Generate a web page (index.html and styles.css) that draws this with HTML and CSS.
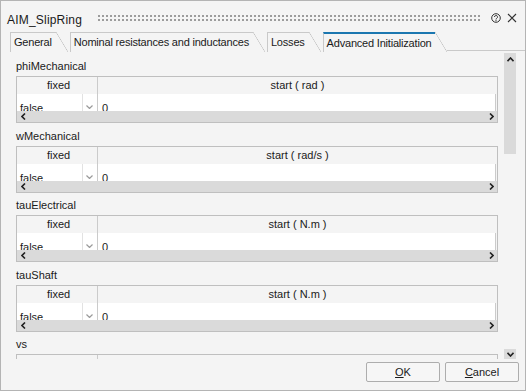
FILE: index.html
```html
<!DOCTYPE html>
<html lang="en">
<head>
    <meta charset="UTF-8">
    <title>AIM_SlipRing</title>
    <link rel="stylesheet" href="styles.css">
</head>
<body>
    <div class="dialog">
        <div class="titlebar">
            <span class="title">AIM_SlipRing</span>
            <span class="grip"></span>
            <svg class="help-icon" width="10" height="10" viewBox="0 0 10 10">
                <circle cx="5" cy="5" r="4.3" fill="none" stroke="#333" stroke-width="1"/>
                <path d="M3.5 4 A1.5 1.5 0 1 1 5.7 5.3 C5.1 5.6 5 5.9 5 6.5" fill="none" stroke="#333" stroke-width="1"/>
                <circle cx="5" cy="7.7" r="0.6" fill="#333"/>
            </svg>
            <svg class="close-icon" width="10" height="10" viewBox="0 0 10 10">
                <path d="M1 1 L9 9 M9 1 L1 9" stroke="#333" stroke-width="1.1"/>
            </svg>
        </div>

        <div class="tabs">
            <div class="tab"><span class="tab-label">General</span></div>
            <div class="tab"><span class="tab-label">Nominal resistances and inductances</span></div>
            <div class="tab"><span class="tab-label">Losses</span></div>
            <div class="tab active"><span class="tab-label">Advanced Initialization</span></div>
            <div class="tab-fill"></div>
        </div>

        <div class="page">
            <div class="groups">
                <div class="group">
                    <div class="group-label">phiMechanical</div>
                    <div class="grid">
                        <div class="grid-head">
                            <div class="col-fixed">fixed</div>
                            <div class="col-start">start ( rad )</div>
                        </div>
                        <div class="grid-row">
                            <div class="cell-fixed">
                                <span class="cell-text">false</span>
                                <span class="combo-arrow"><svg width="7" height="4" viewBox="0 0 7 4"><polyline points="0.5,0.5 3.5,3.5 6.5,0.5" fill="none" stroke="#9a9a9a" stroke-width="1.2"/></svg></span>
                            </div>
                            <div class="cell-start">0</div>
                        </div>
                        <div class="hscroll">
                            <svg width="5" height="7" viewBox="0 0 5 7"><polyline points="4,0.5 1,3.5 4,6.5" fill="none" stroke="#222" stroke-width="1.6"/></svg>
                            <svg width="5" height="7" viewBox="0 0 5 7"><polyline points="1,0.5 4,3.5 1,6.5" fill="none" stroke="#222" stroke-width="1.6"/></svg>
                        </div>
                    </div>
                </div>

                <div class="group">
                    <div class="group-label">wMechanical</div>
                    <div class="grid">
                        <div class="grid-head">
                            <div class="col-fixed">fixed</div>
                            <div class="col-start">start ( rad/s )</div>
                        </div>
                        <div class="grid-row">
                            <div class="cell-fixed">
                                <span class="cell-text">false</span>
                                <span class="combo-arrow"><svg width="7" height="4" viewBox="0 0 7 4"><polyline points="0.5,0.5 3.5,3.5 6.5,0.5" fill="none" stroke="#9a9a9a" stroke-width="1.2"/></svg></span>
                            </div>
                            <div class="cell-start">0</div>
                        </div>
                        <div class="hscroll">
                            <svg width="5" height="7" viewBox="0 0 5 7"><polyline points="4,0.5 1,3.5 4,6.5" fill="none" stroke="#222" stroke-width="1.6"/></svg>
                            <svg width="5" height="7" viewBox="0 0 5 7"><polyline points="1,0.5 4,3.5 1,6.5" fill="none" stroke="#222" stroke-width="1.6"/></svg>
                        </div>
                    </div>
                </div>

                <div class="group">
                    <div class="group-label">tauElectrical</div>
                    <div class="grid">
                        <div class="grid-head">
                            <div class="col-fixed">fixed</div>
                            <div class="col-start">start ( N.m )</div>
                        </div>
                        <div class="grid-row">
                            <div class="cell-fixed">
                                <span class="cell-text">false</span>
                                <span class="combo-arrow"><svg width="7" height="4" viewBox="0 0 7 4"><polyline points="0.5,0.5 3.5,3.5 6.5,0.5" fill="none" stroke="#9a9a9a" stroke-width="1.2"/></svg></span>
                            </div>
                            <div class="cell-start">0</div>
                        </div>
                        <div class="hscroll">
                            <svg width="5" height="7" viewBox="0 0 5 7"><polyline points="4,0.5 1,3.5 4,6.5" fill="none" stroke="#222" stroke-width="1.6"/></svg>
                            <svg width="5" height="7" viewBox="0 0 5 7"><polyline points="1,0.5 4,3.5 1,6.5" fill="none" stroke="#222" stroke-width="1.6"/></svg>
                        </div>
                    </div>
                </div>

                <div class="group">
                    <div class="group-label">tauShaft</div>
                    <div class="grid">
                        <div class="grid-head">
                            <div class="col-fixed">fixed</div>
                            <div class="col-start">start ( N.m )</div>
                        </div>
                        <div class="grid-row">
                            <div class="cell-fixed">
                                <span class="cell-text">false</span>
                                <span class="combo-arrow"><svg width="7" height="4" viewBox="0 0 7 4"><polyline points="0.5,0.5 3.5,3.5 6.5,0.5" fill="none" stroke="#9a9a9a" stroke-width="1.2"/></svg></span>
                            </div>
                            <div class="cell-start">0</div>
                        </div>
                        <div class="hscroll">
                            <svg width="5" height="7" viewBox="0 0 5 7"><polyline points="4,0.5 1,3.5 4,6.5" fill="none" stroke="#222" stroke-width="1.6"/></svg>
                            <svg width="5" height="7" viewBox="0 0 5 7"><polyline points="1,0.5 4,3.5 1,6.5" fill="none" stroke="#222" stroke-width="1.6"/></svg>
                        </div>
                    </div>
                </div>

                <div class="group">
                    <div class="group-label">vs</div>
                    <div class="grid">
                        <div class="grid-head">
                            <div class="col-fixed">fixed</div>
                            <div class="col-start">start ( V )</div>
                        </div>
                        <div class="grid-row">
                            <div class="cell-fixed">
                                <span class="cell-text">false</span>
                                <span class="combo-arrow"></span>
                            </div>
                            <div class="cell-start">0</div>
                        </div>
                    </div>
                </div>
            </div>

            <div class="vscroll">
                <div class="vscroll-thumb">
                    <svg width="7" height="5" viewBox="0 0 7 5"><polyline points="0.5,4.2 3.5,1 6.5,4.2" fill="none" stroke="#222" stroke-width="1.6"/></svg>
                </div>
                <div class="vscroll-track"></div>
                <div class="vscroll-btn">
                    <svg width="7" height="5" viewBox="0 0 7 5"><polyline points="0.5,0.8 3.5,4 6.5,0.8" fill="none" stroke="#222" stroke-width="1.6"/></svg>
                </div>
            </div>
        </div>

        <div class="buttons">
            <button class="dlg-btn"><u>O</u>K</button>
            <button class="dlg-btn"><u>C</u>ancel</button>
        </div>
    </div>
</body>
</html>
```

FILE: styles.css
```css
* {
    margin: 0;
    padding: 0;
    box-sizing: border-box;
}

body {
    width: 526px;
    height: 391px;
    overflow: hidden;
    background: #f4f4f4;
    font-family: "Liberation Sans", Arial, sans-serif;
    font-size: 11px;
    color: #1a1a1a;
}

.dialog {
    width: 526px;
    height: 391px;
    border: 1px solid #b4b4b4;
    display: flex;
    flex-direction: column;
    background: #f4f4f4;
}

/* title bar */
.titlebar {
    height: 30px;
    flex: none;
    display: flex;
    align-items: flex-start;
    padding: 12px 0 0 6px;
}

.title {
    font-size: 12px;
    line-height: 14px;
    letter-spacing: 0.2px;
}

.grip {
    flex: 1;
    height: 8px;
    margin: 1px 9px 0 15px;
    background-image: radial-gradient(circle, #9c9c9c 0.75px, transparent 1.1px);
    background-size: 4px 4px;
}

.help-icon {
    margin-right: 6px;
}

.close-icon {
    margin-right: 8px;
}

/* tabs */
.tabs {
    height: 20px;
    flex: none;
    margin-top: 1px;
    display: flex;
    padding-left: 9px;
}

.tab {
    display: flex;
    margin-right: 2px;
}

.tab-label {
    border-left: 1px solid #c9c9c9;
    border-top: 1px solid #c9c9c9;
    padding: 0 4px 0 3px;
    line-height: 19px;
    letter-spacing: -0.2px;
    white-space: nowrap;
}

.tab::after {
    content: "";
    width: 12px;
    height: 20px;
    background: linear-gradient(to bottom left, transparent calc(50% - 0.6px), #c4c4c4 50%, transparent calc(50% + 0.6px));
}

.tab.active .tab-label {
    border-top: 2px solid #1b77b0;
    line-height: 18px;
}

.tab.active {
    margin-right: 0;
}

.tab-fill {
    flex: 1;
    border-bottom: 1px solid #c9c9c9;
    margin-bottom: 1px;
}

/* page */
.page {
    flex: 1;
    display: flex;
    min-height: 0;
}

.groups {
    flex: 1;
    padding: 7px 0 0 15px;
    overflow: hidden;
}

.group {
    height: 69.5px;
}

.group-label {
    line-height: 14px;
    margin-bottom: 3px;
}

.grid {
    border: 1px solid #bfbfbf;
    background: #f4f4f4;
}

.grid-head {
    display: flex;
    height: 17px;
    line-height: 17px;
    text-align: center;
}

.col-fixed {
    width: 81px;
    padding-left: 3px;
    border-right: 1px solid #cbcbcb;
}

.col-start {
    flex: 1;
}

.grid-row {
    display: flex;
    height: 17px;
    overflow: hidden;
    padding-right: 1px;
}

.cell-fixed {
    width: 81px;
    display: flex;
    background: #fff;
    border-right: 1px solid #cbcbcb;
}

.cell-text {
    flex: 1;
    padding: 7px 0 0 3px;
    line-height: 14px;
}

.combo-arrow {
    width: 15px;
    border-left: 1px solid #e2e2e2;
    display: flex;
    justify-content: center;
    padding: 11px 2px 0 0;
}

.cell-start {
    flex: 1;
    background: #fff;
    border-right: 1px solid #cbcbcb;
    padding: 7px 0 0 4px;
    line-height: 14px;
}

.hscroll {
    height: 11px;
    background: #dadada;
    display: flex;
    justify-content: space-between;
    align-items: center;
    padding: 0 3px 0 4px;
}

/* vertical scrollbar */
.vscroll {
    width: 12px;
    margin: 1px 9px 0 6px;
    display: flex;
    flex-direction: column;
}

.vscroll-thumb {
    height: 101px;
    background: #dadada;
    display: flex;
    justify-content: center;
    padding-top: 4px;
}

.vscroll-track {
    flex: 1;
}

.vscroll-btn {
    height: 10px;
    background: #dadada;
    display: flex;
    justify-content: center;
    align-items: center;
}

/* buttons */
.buttons {
    height: 31px;
    flex: none;
    display: flex;
    justify-content: flex-end;
    gap: 5px;
    padding: 3px 6px 0 0;
}

.dlg-btn {
    width: 74px;
    height: 20px;
    border: 1px solid #adadad;
    border-radius: 2px;
    background: #f6f6f6;
    font-family: "Liberation Sans", Arial, sans-serif;
    font-size: 11px;
    color: #1a1a1a;
}
```
